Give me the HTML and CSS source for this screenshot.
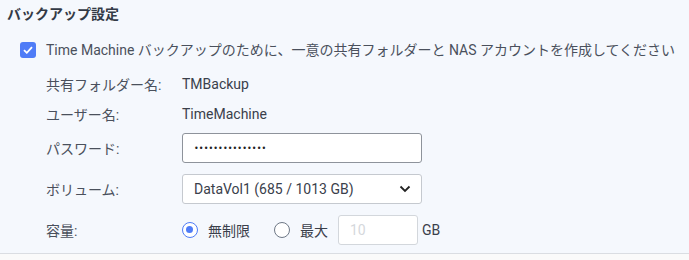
FILE: index.html
```html
<!DOCTYPE html>
<html lang="ja">
<head>
  <meta charset="UTF-8" />
  <title>バックアップ設定</title>
  <link rel="stylesheet" href="styles.css">
</head>
<body>

<div class="panel">
  <h2 class="title">バックアップ設定</h2>

  <label class="check-row">
    <span class="checkbox">
      <svg width="10" height="8" viewBox="0 0 10 8"><path d="M1 4.2 L3.8 6.8 L9 1.2" fill="none" stroke="#fff" stroke-width="1.8" /></svg>
    </span>
    Time Machine バックアップのために、一意の共有フォルダーと NAS アカウントを作成してください
  </label>

  <div class="form">
    <div class="label">共有フォルダー名:</div>
    <div class="value">TMBackup</div>

    <div class="label">ユーザー名:</div>
    <div class="value">TimeMachine</div>

    <div class="label">パスワード:</div>
    <div class="value"><div class="input password">•••••••••••••••</div></div>

    <div class="label">ボリューム:</div>
    <div class="value">
      <div class="input select">
        <span>DataVol1 (685 / 1013 GB)</span>
        <svg width="12" height="8" viewBox="0 0 12 8"><path d="M1.5 1.5 L6 6 L10.5 1.5" fill="none" stroke="#222" stroke-width="1.8" /></svg>
      </div>
    </div>

    <div class="label">容量:</div>
    <div class="value quota">
      <span class="radio checked"></span><span class="radio-text">無制限</span>
      <span class="radio"></span><span class="radio-text">最大</span>
      <div class="input small">10</div>
      <span class="unit">GB</span>
    </div>
  </div>
</div>

<div class="footer"></div>

</body>
</html>
```

FILE: styles.css
```css
body {
  margin: 0;
  font-family: Roboto, "Noto Sans CJK JP", sans-serif;
  background: #fafafa;
  color: #4a505c;
}
.panel {
  background: #f5f8fd;
  height: 253px;
  border-bottom: 1px solid #dadde2;
}
.title {
  margin: 0;
  padding: 3px 0 0 7px;
  font-size: 14px;
  font-weight: bold;
  color: #333a46;
  line-height: 22px;
}
.check-row {
  display: flex;
  align-items: center;
  margin: 15px 0 0 20px;
  font-size: 14px;
  line-height: 20px;
  white-space: nowrap;
}
.checkbox {
  width: 16px;
  height: 16px;
  border-radius: 3px;
  background: #4f7cf7;
  display: flex;
  align-items: center;
  justify-content: center;
  margin-right: 10px;
}
.form {
  display: grid;
  grid-template-columns: 136px 1fr;
  margin: 9px 0 0 46px;
  font-size: 14px;
}
.label, .value {
  display: flex;
  align-items: center;
}
.label:nth-child(1), .value:nth-child(2) { height: 30px; }
.label:nth-child(3), .value:nth-child(4) { height: 29px; }
.label:nth-child(5), .value:nth-child(6) { height: 40px; }
.label:nth-child(7), .value:nth-child(8) { height: 42px; }
.label:nth-child(9), .value:nth-child(10) { height: 40px; }
.value {
  color: #3a404b;
}
.input {
  box-sizing: border-box;
  background: #fff;
  border: 1px solid #8e939b;
  border-radius: 3px;
  display: flex;
  align-items: center;
}
.password {
  width: 240px;
  height: 30px;
  padding-left: 11px;
  font-family: "DejaVu Sans", sans-serif;
  font-size: 8px;
  letter-spacing: 0.1px;
  color: #222;
}
.select {
  width: 240px;
  height: 30px;
  padding: 0 10px 0 11px;
  justify-content: space-between;
  border-color: #c5c9cf;
  color: #3a404b;
}
.radio {
  box-sizing: border-box;
  width: 16px;
  height: 16px;
  border-radius: 50%;
  border: 1.5px solid #6e7886;
  background: #fff;
  margin-right: 10px;
  position: relative;
}
.radio.checked {
  border-color: #4f7cf7;
}
.radio.checked::after {
  content: "";
  position: absolute;
  left: 3px;
  top: 3px;
  width: 7px;
  height: 7px;
  border-radius: 50%;
  background: #4f7cf7;
}
.radio-text {
  margin-right: 24px;
}
.radio-text + .radio + .radio-text {
  margin-right: 10px;
}
.small {
  width: 80px;
  height: 30px;
  padding-left: 11px;
  border-color: #d3d7dc;
  color: #d5d8dc;
}
.unit {
  margin-left: 4px;
}
.footer {
  height: 6px;
}
```
